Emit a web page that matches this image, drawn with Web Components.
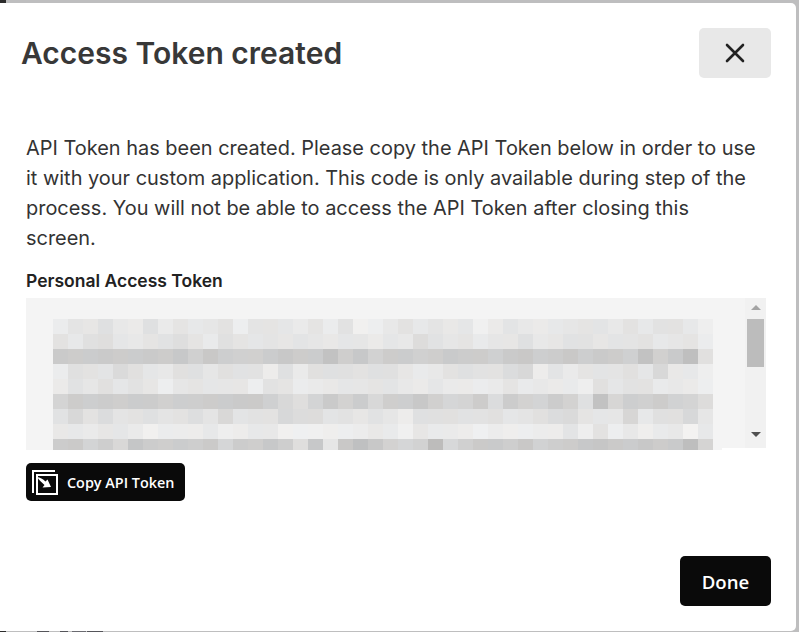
<!DOCTYPE html>
<html lang="en">
<head>
<meta charset="utf-8">
<title>Access Token created</title>
<style>
    html, body { margin: 0; padding: 0; background: #bebebf; }
</style>
</head>
<body>
<token-backdrop>
    <token-dialog heading="Access Token created">
        <p>API Token has been created. Please copy the API Token below in order to use it with your custom application. This code is only available during step of the process. You will not be able to access the API Token after closing this screen.</p>
        <token-field label="Personal Access Token"></token-field>
        <action-button kind="copy">Copy API Token</action-button>
        <action-button slot="footer" kind="done">Done</action-button>
    </token-dialog>
</token-backdrop>

<script>
class TokenBackdrop extends HTMLElement {
    constructor() {
        super();
        this.attachShadow({ mode: 'open' });
    }

    connectedCallback() {
        // dark bits are the page behind the overlay, just peeking out at the edges
        this.shadowRoot.innerHTML = `
            <style>
                :host {
                    display: block;
                    width: 799px;
                    height: 632px;
                    box-sizing: border-box;
                    padding: 3px 3px 1px 0;
                    background-color: #bebebf;
                    background-image:
                        linear-gradient(#2b2b2b, #2b2b2b),
                        linear-gradient(#2b2b2b, #2b2b2b),
                        linear-gradient(#55555a, #55555a),
                        linear-gradient(#55555a, #55555a),
                        linear-gradient(#6a6a70, #6a6a70),
                        linear-gradient(#55555a, #55555a);
                    background-repeat: no-repeat;
                    background-size: 6px 3px, 6px 1px, 12px 1px, 8px 1px, 14px 1px, 16px 1px;
                    background-position: 0 0, 0 631px, 37px 631px, 60px 631px, 72px 631px, 87px 631px;
                }
            </style>
            <slot></slot>
        `;
    }
}

class TokenDialog extends HTMLElement {
    constructor() {
        super();
        this.attachShadow({ mode: 'open' });
    }

    connectedCallback() {
        this.shadowRoot.innerHTML = `
            <style>
                :host {
                    display: flex;
                    flex-direction: column;
                    height: 628px;
                    box-sizing: border-box;
                    background: #fff;
                    border-radius: 0 5px 5px 0;
                    font-family: Inter, "Liberation Sans", sans-serif;
                    color: #333;
                }

                header {
                    display: flex;
                    align-items: center;
                    justify-content: space-between;
                    padding: 25px 25px 0 21px;
                }

                h1 {
                    margin: 0;
                    font-size: 30px;
                    line-height: 50px;
                    font-weight: 600;
                    color: #383838;
                }

                button {
                    display: flex;
                    align-items: center;
                    justify-content: center;
                    width: 72px;
                    height: 50px;
                    padding: 0;
                    border: 0;
                    border-radius: 5px;
                    background: #e8e8e8;
                }

                .body {
                    padding: 55px 0 0 26px;
                }

                ::slotted(p) {
                    width: 735px;
                    margin: 0;
                    font-size: 19.95px;
                    line-height: 30px;
                    color: #333;
                }

                footer {
                    display: flex;
                    justify-content: flex-end;
                    margin-top: auto;
                    padding: 0 25px 25px 0;
                }
            </style>
            <header>
                <h1>${this.getAttribute('heading')}</h1>
                <button aria-label="Close">
                    <svg width="20" height="20" viewBox="0 0 20 20" fill="none" stroke="#222" stroke-width="2.6" stroke-linecap="round">
                        <path d="M2 2L18 18M18 2L2 18"/>
                    </svg>
                </button>
            </header>
            <div class="body"><slot></slot></div>
            <footer><slot name="footer"></slot></footer>
        `;
    }
}

// one row per line of the blurred token, 44 grey levels each
const MOSAIC_ROWS = [
    'ec e4 e6 e0 e8 ea e0 ea e4 e8 e6 e2 ee e4 e4 e6 ea e4 ec e2 f0 ee e8 e2 e8 e4 e8 e6 f0 ea e4 e8 ea e8 e6 e4 e4 e8 e2 e8 e2 e2 e8 ee',
    'e2 e8 e0 de e6 e8 e4 e2 de e4 ea e0 e4 e6 e4 e6 e4 e6 e8 e6 e6 ea e6 e8 dc e2 e6 e4 ea e6 e6 e0 e8 e6 e2 e2 e6 e4 e4 e2 e8 e6 e4 ec',
    'ca cc cc ca cc cc ca cc c8 d0 c8 ce d0 d0 cc c8 cc cc c2 ce c8 d2 cc cc d0 ce ca cc cc d0 ca c8 ce cc c8 ce ca cc d0 c2 d0 ca bf e0',
    'ec e0 e2 e4 da e0 e6 e8 e0 e0 e6 e0 e2 e2 ec e0 ea e0 e0 e0 e2 e0 e0 e6 ea e8 e2 e0 e2 e2 dc d8 ec e4 ea e4 e4 e4 e0 e6 d8 e8 e8 ee',
    'ea e2 e6 e0 e6 e2 e6 ee e6 e4 e6 e6 e6 ee e2 e4 ec ea e8 e6 e6 e4 e4 e8 ea e6 ea ea ec ea e4 ea e8 ea ea ee e0 e6 e2 e2 ea e8 ea ee',
    'd4 cc ce cc ce cc cc d0 ce ce cc cc ca ca d0 d8 de d4 ca d2 cc d8 ce ce c8 d0 d6 d4 cc dc cc d2 d4 cc d2 e0 c2 d6 ce d0 cc d2 d4 dc',
    'e2 d8 e2 dc e4 e2 e0 e4 e2 de e4 d8 e4 e2 e2 d8 dc dc e4 e2 e6 e2 e6 ec e0 e0 e0 e2 e2 e0 e6 e4 e0 dc da e4 e6 e6 d6 e8 e0 e0 d8 e6',
    'e8 e8 ea e6 e6 ea f0 ec ec ec e8 ee ec e8 e8 f0 f0 f0 ee ee ec e8 ea f0 e6 ea ea ec f0 ec ee ee ec ec e4 ee e2 ee e8 ee ea e8 f2 e8',
    'cc ca d4 ce d8 c6 cc ce cc ce ca d6 cc ce c8 ce de c8 e6 c8 c0 c8 d2 d6 d2 bc d8 d0 ca ca ce c8 d2 ce cc c8 c6 ca cc c8 cc ca be d4'
];

class TokenField extends HTMLElement {
    constructor() {
        super();
        this.attachShadow({ mode: 'open' });
    }

    connectedCallback() {
        const cells = MOSAIC_ROWS.map((row, r) => row.split(' ').map((g, c) => {
            const v = parseInt(g, 16);
            const tint = (r * 5 + c * 7) % 3 - 1;
            return `<i style="background:rgb(${v + tint},${v},${v - tint})"></i>`;
        }).join('')).join('');

        this.shadowRoot.innerHTML = `
            <style>
                :host {
                    display: block;
                    margin-top: 16px;
                }

                label {
                    display: block;
                    font-size: 17.5px;
                    line-height: 24px;
                    font-weight: 600;
                    color: #222;
                }

                .box {
                    position: relative;
                    display: flex;
                    justify-content: flex-end;
                    width: 740px;
                    height: 150px;
                    margin-top: 5px;
                    background: #f4f4f4;
                }

                /* the screenshot's blur patch sits over the field */
                .mosaic {
                    position: absolute;
                    left: 0;
                    top: 0;
                    width: 696px;
                    height: 152px;
                    box-sizing: border-box;
                    padding: 21px 0 0 27px;
                    background: #f4f4f4;
                }

                .cells {
                    display: grid;
                    grid-template-columns: repeat(44, 15px);
                    grid-template-rows: repeat(8, 15px) 11px;
                }

                i { display: block; }

                .bar {
                    display: flex;
                    flex-direction: column;
                    align-items: center;
                    width: 21px;
                    background: #f1f1f1;
                }

                .up, .down {
                    width: 0;
                    height: 0;
                    border-left: 5px solid transparent;
                    border-right: 5px solid transparent;
                }

                .up {
                    margin-top: 7px;
                    border-bottom: 5px solid #a3a3a3;
                }

                .thumb {
                    width: 17px;
                    height: 48px;
                    margin-top: 9px;
                    background: #bcbcbc;
                }

                .down {
                    margin-top: 65px;
                    border-top: 5px solid #505050;
                }
            </style>
            <label>${this.getAttribute('label')}</label>
            <div class="box">
                <div class="mosaic"><div class="cells">${cells}</div></div>
                <div class="bar">
                    <div class="up"></div>
                    <div class="thumb"></div>
                    <div class="down"></div>
                </div>
            </div>
        `;
    }
}

class ActionButton extends HTMLElement {
    constructor() {
        super();
        this.attachShadow({ mode: 'open' });
    }

    connectedCallback() {
        const copy = this.getAttribute('kind') === 'copy';
        const icon = copy ? `
            <svg width="26" height="26" viewBox="0 0 26 26" fill="none" stroke="#fff" stroke-width="2">
                <path d="M1 24V2H23"/>
                <path d="M5 6H25V25H5Z"/>
                <path d="M5 8C8 8.5 11 10 13.5 12.5L15.5 10.5L19 18L10.5 18.5L12.5 16C10 13.5 7.5 11.5 5 8Z" fill="#fff" stroke="none"/>
            </svg>` : '';

        this.shadowRoot.innerHTML = `
            <style>
                :host {
                    display: ${copy ? 'flex' : 'inline-flex'};
                    align-items: center;
                    box-sizing: border-box;
                    width: ${copy ? '159px' : '91px'};
                    height: ${copy ? '38px' : '50px'};
                    margin-top: ${copy ? '15px' : '0'};
                    padding-left: ${copy ? '6px' : '0'};
                    justify-content: ${copy ? 'flex-start' : 'center'};
                    gap: 9px;
                    border-radius: 5px;
                    background: #0a0a0a;
                    color: #fff;
                    font-family: "Open Sans", "Liberation Sans", sans-serif;
                    font-size: ${copy ? '14.4px' : '18.6px'};
                    font-weight: 600;
                }
            </style>
            ${icon}<slot></slot>
        `;
    }
}

customElements.define('token-backdrop', TokenBackdrop);
customElements.define('token-dialog', TokenDialog);
customElements.define('token-field', TokenField);
customElements.define('action-button', ActionButton);
</script>
</body>
</html>
